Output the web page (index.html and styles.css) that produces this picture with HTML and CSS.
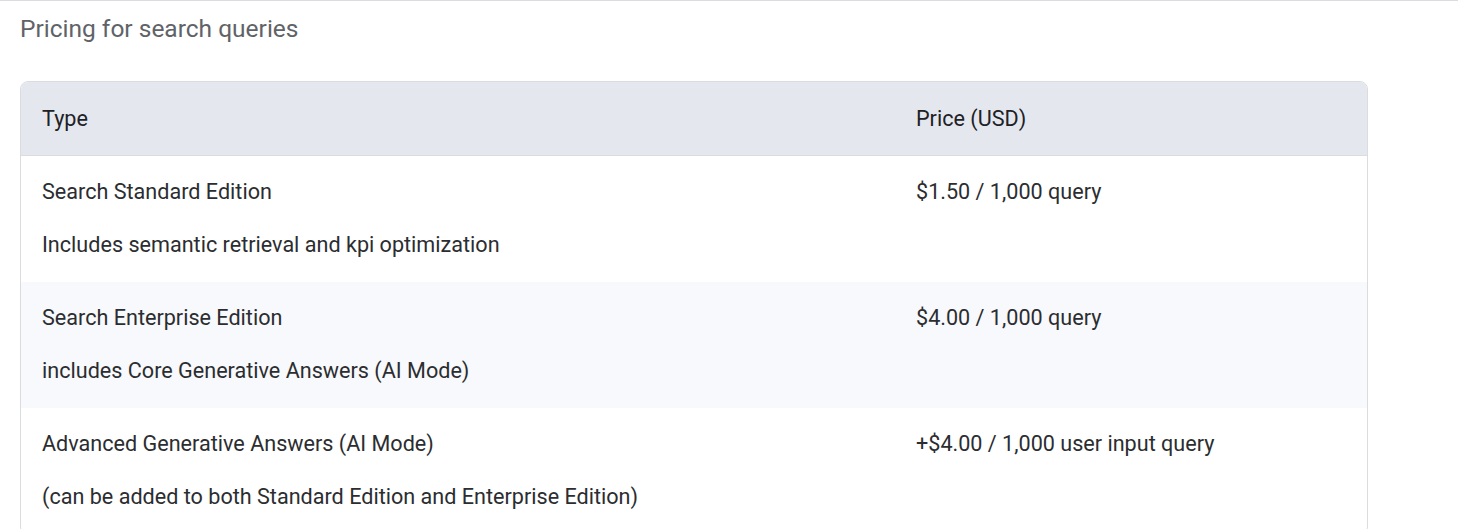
FILE: index.html
```html
<!DOCTYPE html>
<html lang="en">
<head>
<meta charset="utf-8">
<title>Pricing for search queries</title>
<link rel="stylesheet" href="styles.css">
</head>
<body>
<div class="page">
  <h3 class="title">Pricing for search queries</h3>
  <div class="table-wrap">
    <table class="pricing">
      <thead>
        <tr><th class="col-type">Type</th><th>Price (USD)</th></tr>
      </thead>
      <tbody>
        <tr>
          <td><p>Search Standard Edition</p><p>Includes semantic retrieval and kpi optimization</p></td>
          <td><p>$1.50 / 1,000 query</p></td>
        </tr>
        <tr class="alt">
          <td><p>Search Enterprise Edition</p><p>includes Core Generative Answers (AI Mode)</p></td>
          <td><p>$4.00 / 1,000 query</p></td>
        </tr>
        <tr>
          <td><p>Advanced Generative Answers (AI Mode)</p><p>(can be added to both Standard Edition and Enterprise Edition)</p></td>
          <td><p>+$4.00 / 1,000 user input query</p></td>
        </tr>
      </tbody>
    </table>
  </div>
</div>
</body>
</html>
```

FILE: styles.css
```css
html, body {
  margin: 0;
  padding: 0;
  background: #ffffff;
}
body {
  font-family: Roboto, "Liberation Sans", Arial, sans-serif;
  color: #202124;
}
.page {
  border-top: 1px solid #dadce0;
  padding: 0 90px 0 20px;
}
.title {
  margin: 0;
  padding-top: 13px;
  font-size: 24.5px;
  line-height: 30px;
  font-weight: 400;
  color: #5f6368;
}
.table-wrap {
  margin-top: 37px;
  width: 1348px;
  box-sizing: border-box;
  border: 1px solid #dadce0;
  border-radius: 8px;
  overflow: hidden;
}
.pricing {
  width: 100%;
  table-layout: fixed;
  border-collapse: collapse;
  font-size: 21.6px;
  line-height: 26px;
}
.pricing th {
  background: #e5e7ef;
  font-weight: 400;
  text-align: left;
  padding: 24px 21px 23px;
  border-bottom: 1px solid #dadce0;
  color: #202124;
}
.pricing .col-type {
  width: 832px;
}
.pricing td {
  vertical-align: top;
  padding: 23px 21px 24px;
  color: #2b2d30;
}
.pricing td p {
  margin: 0;
}
.pricing td p + p {
  margin-top: 27px;
}
.pricing tr.alt td {
  background: #f8f9fc;
}
```
